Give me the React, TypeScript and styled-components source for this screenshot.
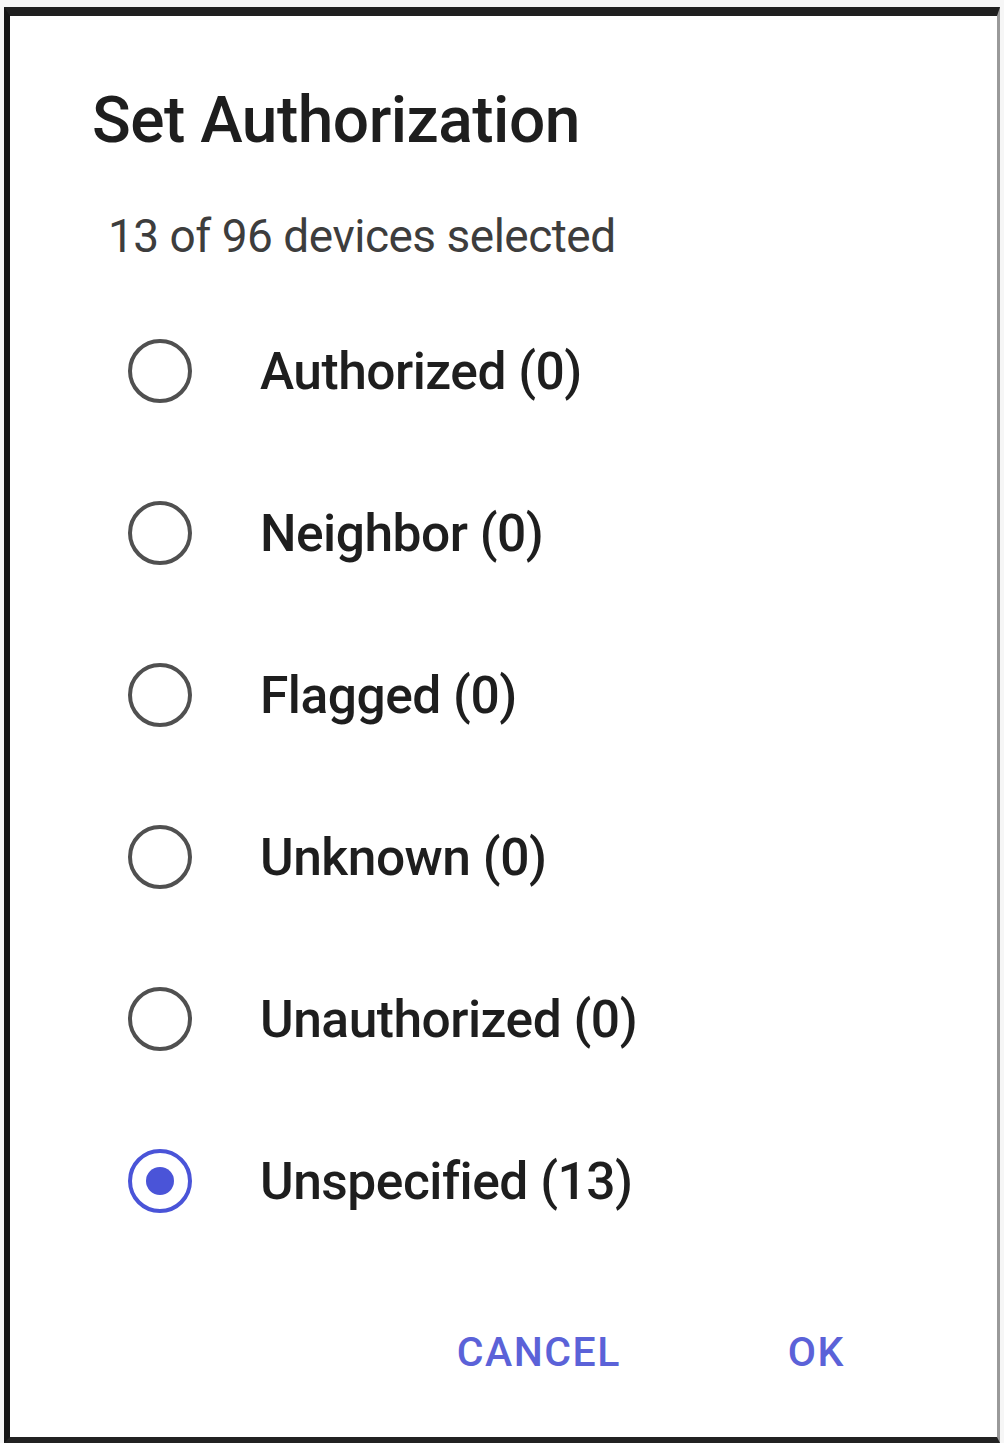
import React, { useState } from "react";
import styled, { createGlobalStyle } from "styled-components";

const GlobalStyle = createGlobalStyle`
  html, body {
    margin: 0;
    padding: 0;
    background: #f6f6f6;
  }
  * {
    box-sizing: border-box;
  }
`;

const Frame = styled.div`
  width: 1004px;
  height: 1443px;
  padding: 7px 4px 0 4px;
`;

const Dialog = styled.div`
  height: 100%;
  background: #ffffff;
  border-top: 9px solid #1f1f1f;
  border-left: 6px solid #151515;
  border-right: 3px solid #9a9a9a;
  border-bottom: 6px solid #222222;
  display: flex;
  flex-direction: column;
  font-family: Roboto, "Liberation Sans", Arial, sans-serif;
`;

const Title = styled.h1`
  margin: 69px 0 0 82px;
  font-size: 64px;
  line-height: 72px;
  font-weight: 500;
  color: #1e1e1e;
  letter-spacing: -0.5px;
`;

const Subtitle = styled.div`
  margin: 51px 0 0 98px;
  font-size: 46px;
  line-height: 56px;
  color: #3d3d3d;
  letter-spacing: -0.5px;
`;

const Options = styled.div`
  display: flex;
  flex-direction: column;
  margin-top: 26px;
`;

const Option = styled.label`
  display: flex;
  align-items: center;
  height: 162px;
  padding-left: 118px;
  cursor: pointer;
`;

const Ring = styled.span<{ $checked: boolean }>`
  width: 64px;
  height: 64px;
  border-radius: 50%;
  border: 4.5px solid ${(p) => (p.$checked ? "#4a54d8" : "#505050")};
  display: flex;
  align-items: center;
  justify-content: center;
  flex-shrink: 0;
`;

const Dot = styled.span`
  width: 28px;
  height: 28px;
  border-radius: 50%;
  background: #4a54d8;
`;

const OptionText = styled.span`
  margin-left: 68px;
  font-size: 51.5px;
  font-weight: 500;
  color: #1e1e1e;
  letter-spacing: -0.5px;
`;

const Actions = styled.div`
  display: flex;
  justify-content: flex-end;
  gap: 167px;
  margin-top: 66px;
  padding-right: 152px;
`;

const ActionButton = styled.button`
  border: none;
  background: none;
  padding: 0;
  font-family: Roboto, "Liberation Sans", Arial, sans-serif;
  font-size: 41px;
  font-weight: 500;
  color: #5b62d8;
  letter-spacing: 1.5px;
  text-transform: uppercase;
  cursor: pointer;
`;

const options = [
  { label: "Authorized", count: 0 },
  { label: "Neighbor", count: 0 },
  { label: "Flagged", count: 0 },
  { label: "Unknown", count: 0 },
  { label: "Unauthorized", count: 0 },
  { label: "Unspecified", count: 13 },
];

export default function App() {
  const [selected, setSelected] = useState("Unspecified");

  return (
    <>
      <GlobalStyle />
      <Frame>
        <Dialog>
          <Title>Set Authorization</Title>
          <Subtitle>13 of 96 devices selected</Subtitle>
          <Options>
            {options.map((o) => (
              <Option key={o.label} onClick={() => setSelected(o.label)}>
                <Ring $checked={selected === o.label}>
                  {selected === o.label && <Dot />}
                </Ring>
                <OptionText>
                  {o.label} ({o.count})
                </OptionText>
              </Option>
            ))}
          </Options>
          <Actions>
            <ActionButton>Cancel</ActionButton>
            <ActionButton>OK</ActionButton>
          </Actions>
        </Dialog>
      </Frame>
    </>
  );
}
